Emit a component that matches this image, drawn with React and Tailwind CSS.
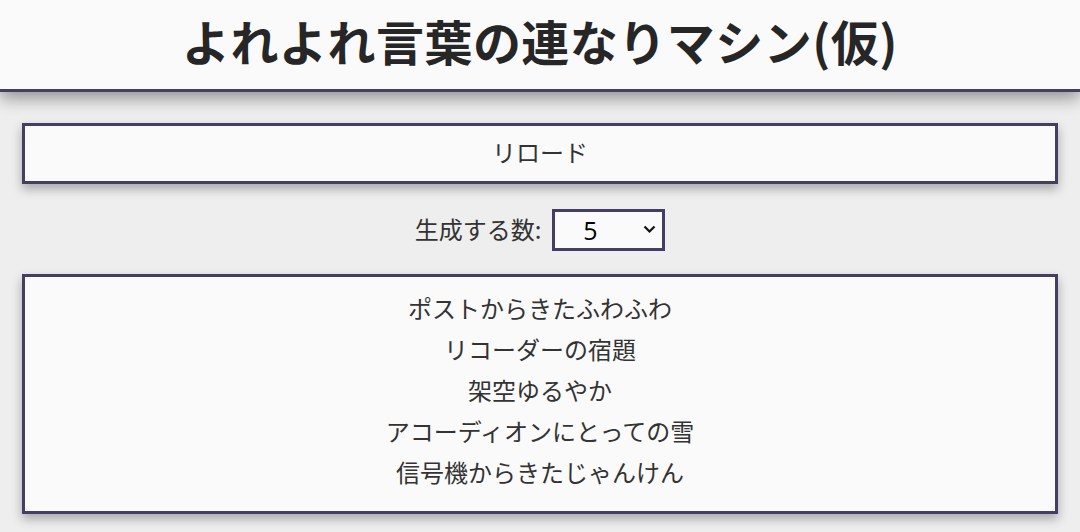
import React, { useState } from 'react';

const words = [
  'ポストからきたふわふわ',
  'リコーダーの宿題',
  '架空ゆるやか',
  'アコーディオンにとっての雪',
  '信号機からきたじゃんけん',
];

const App = () => {
  const [count, setCount] = useState('5');

  return (
    <div
      className="min-h-screen bg-[#eeeeee] text-[#333333]"
      style={{ fontFamily: '"Noto Sans CJK JP", "Noto Sans", sans-serif' }}
    >
      {/* Header */}
      <header className="h-[92px] pb-[9px] bg-[#fafafa] border-b-[3px] border-[#453d63] shadow-[0_6px_16px_rgba(0,0,0,0.4)] flex items-center justify-center">
        <h1 className="text-[48px] font-bold text-[#262626] leading-none tracking-[0.01em]">
          よれよれ言葉の連なりマシン(仮)
        </h1>
      </header>

      <main className="w-[96%] mx-auto pt-[31px] flex flex-col items-center">
        <button className="w-full h-[61px] pb-[4px] bg-[#fafafa] border-[3px] border-[#453d63] shadow-[0_5px_10px_rgba(0,0,0,0.3)] text-[24px] text-[#333333] flex items-center justify-center">
          リロード
        </button>

        <div className="mt-[25px] flex items-center gap-[11px]">
          <label className="text-[24px] text-[#333333] pb-[2px]">生成する数:</label>
          <div className="relative">
            <select
              value={count}
              onChange={(e) => setCount(e.target.value)}
              className="appearance-none w-[113px] h-[42px] bg-[#fafafa] border-[3px] border-[#453d63] pl-[28px] text-[25px] text-black outline-none"
              style={{ fontFamily: '"Open Sans", "Noto Sans", sans-serif' }}
            >
              {['1', '2', '3', '4', '5', '6', '7', '8', '9', '10'].map((n) => (
                <option key={n} value={n}>{n}</option>
              ))}
            </select>
            <svg className="absolute right-[9px] top-[16px] pointer-events-none" width="13" height="9" viewBox="0 0 13 9">
              <path d="M1.5 1.5 L6.5 6.5 L11.5 1.5" fill="none" stroke="#111" strokeWidth="2.2" />
            </svg>
          </div>
        </div>

        <div className="mt-[23px] w-full bg-[#fafafa] border-[3px] border-[#453d63] shadow-[0_5px_10px_rgba(0,0,0,0.3)] pt-[10px] pb-[19px] flex flex-col items-center">
          {words.map((w) => (
            <div key={w} className="text-[24px] leading-[41px] text-[#333333]">{w}</div>
          ))}
        </div>
      </main>
    </div>
  );
};

export default App;
